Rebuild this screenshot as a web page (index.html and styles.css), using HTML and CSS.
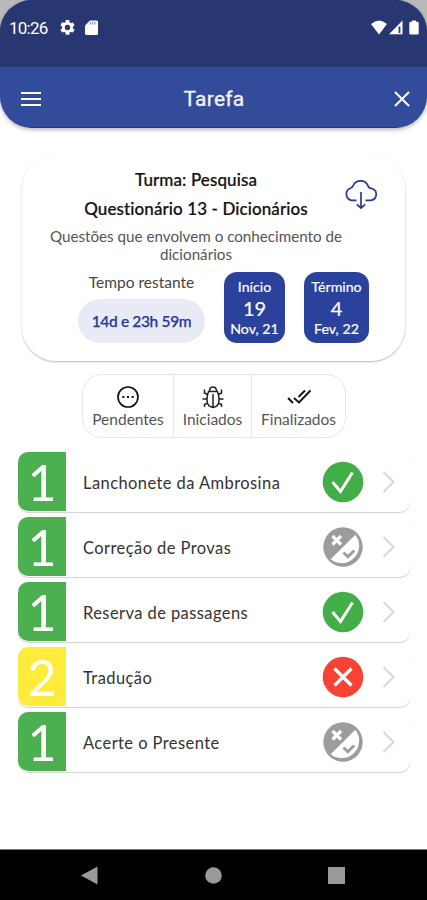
FILE: index.html
```html
<!DOCTYPE html>
<html lang="pt-BR">
<head>
<meta charset="utf-8">
<title>Tarefa</title>
<link rel="stylesheet" href="styles.css">
</head>
<body>
<svg width="0" height="0" class="defs" aria-hidden="true">
  <symbol id="ok" viewBox="0 0 42 42"><circle cx="21" cy="21" r="20.3" fill="#43ad47"/><path d="M10.500 21l8 9.500L30.500 11.500" fill="none" stroke="#fff" stroke-width="3"/></symbol>
  <symbol id="bad" viewBox="0 0 42 42"><circle cx="21" cy="21" r="20.3" fill="#f74234"/><path d="M12.500 12.500l17 17M29.500 12.500l-17 17" fill="none" stroke="#fff" stroke-width="3.200"/></symbol>
  <symbol id="half" viewBox="0 0 42 42"><circle cx="21" cy="21" r="19.700" fill="#9c9c9c"/><path d="M33.300 8.700A17.500 17.500 0 0 1 8.700 33.300z" fill="#fff"/><path d="M10.500 10l8.500 8.500M19 10l-8.500 8.500" stroke="#fff" stroke-width="3.200" fill="none"/><path d="M21.500 26.500l4.300 4.300 6.400-6.400" stroke="#9c9c9c" stroke-width="2.800" fill="none"/></symbol>
  <symbol id="chev" viewBox="0 0 14 22"><path d="M1.500 1l10 10-10 10" fill="none" stroke="#d8d8d8" stroke-width="2"/></symbol>
</svg>
<header class="top">
  <div class="status">
    <span class="clock">10:26</span>
    <svg class="gear" width="15" height="15" viewBox="2 2 20 20"><path fill="#fff" d="M19.140 12.940c.04-.3.060-.61.060-.94s-.02-.64-.07-.94l2.030-1.580a.49.49 0 0 0 .12-.61l-1.920-3.320a.49.49 0 0 0-.59-.22l-2.390.96a7 7 0 0 0-1.620-.94l-.36-2.540A.48.48 0 0 0 13.920 2h-3.840a.48.48 0 0 0-.47.410l-.36 2.540c-.59.240-1.130.57-1.620.94l-2.390-.96a.49.49 0 0 0-.59.220L2.740 8.870a.48.48 0 0 0 .12.610l2.030 1.580a7 7 0 0 0 0 1.880l-2.030 1.580a.49.49 0 0 0-.12.610l1.920 3.320c.12.220.370.290.590.220l2.390-.96c.5.380 1.030.7 1.620.94l.36 2.540c.05.240.240.410.480.410h3.840c.240 0 .440-.17.470-.41l.36-2.540c.59-.24 1.130-.56 1.620-.94l2.390.96c.22.080.470 0 .59-.22l1.920-3.320a.48.48 0 0 0-.12-.61zM12 15.600a3.600 3.600 0 1 1 0-7.200 3.600 3.600 0 0 1 0 7.200z"/></svg>
    <svg class="sd" width="13" height="15" viewBox="0 0 13 15"><path fill="#fff" d="M5 .5h6.500Q13 .5 13 2v11.500q0 1.500-1.500 1.500h-10Q0 15 0 13.500V5.500z"/><path d="M5.500 2v2.500M7.700 2v2.500M9.900 2v2.500" stroke="#8d95b9" stroke-width="1.200"/></svg>
    <svg class="signals" width="49" height="15" viewBox="0 0 49 15"><path fill="#fff" d="M0 4Q8-3 16 4L8 14.500z"/><path fill="#fff" d="M31.500.5v13.800H18z"/><path d="M28.500 6.500v6.500" stroke="#283772" stroke-width="1.800"/><path fill="#fff" d="M41 1.700V.5h4v1.200h1.500q1.200 0 1.200 1.200v10.300q0 1.200-1.200 1.200h-7q-1.200 0-1.200-1.200V2.900q0-1.200 1.200-1.200z"/></svg>
  </div>
  <div class="appbar">
    <svg width="20" height="14" viewBox="0 0 20 14"><path d="M0 1h20M0 7h20M0 13h20" stroke="#fff" stroke-width="2"/></svg>
    <h1>Tarefa</h1>
    <svg width="16" height="16" viewBox="0 0 16 16"><path d="M1 1l14 14M15 1L1 15" stroke="#fff" stroke-width="2"/></svg>
  </div>
</header>
<main>
  <section class="card">
    <div class="intro">
      <h2>Turma: Pesquisa</h2>
      <h2 class="quiz">Questionário 13 - Dicionários</h2>
      <p>Questões que envolvem o conhecimento de<br>dicionários</p>
    </div>
    <svg class="cloud" width="34" height="30" viewBox="0 0 34 30"><path d="M12.500 20.300H7.500A6.300 6.300 0 0 1 6.500 8.200Q8.500 7.500 9.200 5.500A8.200 8.200 0 0 1 24 5.600Q24.500 8.300 27.500 8.500A6 6 0 0 1 27 20.300h-5.500" fill="none" stroke="#27389b" stroke-width="1.700"/><path d="M17 12v15M12.800 24.300L17 28l4.200-3.700" fill="none" stroke="#27389b" stroke-width="1.700"/></svg>
    <div class="times">
      <div class="remaining"><span class="label">Tempo restante</span><span class="pill">14d e 23h 59m</span></div>
      <div class="date start"><span>Início</span><b>19</b><span>Nov, 21</span></div>
      <div class="date end"><span>Término</span><b>4</b><span>Fev, 22</span></div>
    </div>
  </section>
  <nav class="tabs">
    <a class="t1"><svg width="24" height="24" viewBox="0 0 24 24"><circle cx="12" cy="12" r="10" fill="none" stroke="#111" stroke-width="1.700"/><path d="M6.300 12h2M11 12h2M15.700 12h2" stroke="#111" stroke-width="1.900"/></svg><span>Pendentes</span></a>
    <a class="t2"><svg width="24" height="24" viewBox="0 0 24 24"><g fill="none" stroke="#222" stroke-width="1.500"><path d="M7.500 6.500h9q1.500 4 1.500 8.500 0 6.500-6 7.500-6-1-6-7.500 0-4.500 1.500-8.500zM8.500 6.500Q8.500 2 12 2t3.500 4.500M12 9v13M6.500 9.500L3.500 8V4.500M17.500 9.500l3-1.500V4.500M1.500 14H6M18 14h4.500M6.500 18l-3 1.500V22M17.500 18l3 1.500V22"/></g></svg><span>Iniciados</span></a>
    <a class="t3"><svg width="26" height="24" viewBox="0 0 26 24"><path d="M2 13l5 5M8 13l5 4.500L24.500 5.500M12.500 12l6.500-6.500" fill="none" stroke="#111" stroke-width="1.900"/></svg><span>Finalizados</span></a>
  </nav>
  <ul class="list">
    <li><b class="num">1</b><span class="name">Lanchonete da Ambrosina</span><svg class="state"><use href="#ok"/></svg><svg class="chev"><use href="#chev"/></svg></li>
    <li><b class="num">1</b><span class="name">Correção de Provas</span><svg class="state"><use href="#half"/></svg><svg class="chev"><use href="#chev"/></svg></li>
    <li><b class="num">1</b><span class="name">Reserva de passagens</span><svg class="state"><use href="#ok"/></svg><svg class="chev"><use href="#chev"/></svg></li>
    <li><b class="num yellow">2</b><span class="name">Tradução</span><svg class="state"><use href="#bad"/></svg><svg class="chev"><use href="#chev"/></svg></li>
    <li><b class="num">1</b><span class="name">Acerte o Presente</span><svg class="state"><use href="#half"/></svg><svg class="chev"><use href="#chev"/></svg></li>
  </ul>
</main>
<footer class="sysnav">
  <svg width="17" height="19" viewBox="0 0 17 19"><path d="M16.500.5v18L0 9.500z" fill="#999"/></svg>
  <svg width="17" height="17" viewBox="0 0 17 17"><circle cx="8.500" cy="8.500" r="8.300" fill="#999"/></svg>
  <svg width="17" height="17" viewBox="0 0 17 17"><path d="M0 0h17v17H0z" fill="#999"/></svg>
</footer>
</body>
</html>
```
FILE: styles.css
```css
* { box-sizing: border-box; }
html, body { margin: 0; }
body {
  height: 900px;
  overflow: hidden;
  display: flex;
  flex-direction: column;
  font-family: Lato, sans-serif;
  color: #222;
  background: linear-gradient(#b9b9b9 0 40px, #fff 40px);
}
.defs { position: absolute; }
svg { flex: none; display: block; }
.top {
  height: 128px;
  flex: none;
  border-radius: 32px;
  overflow: hidden;
  background: #324b9b;
  border-bottom: 1px solid #123a91;
  box-shadow: 0 2px 4px rgba(0, 0, 0, .28);
}
.status {
  height: 67px;
  background: #283772;
  display: flex;
  align-items: flex-start;
  padding: 20px 7px 0 9px;
}
.clock {
  width: 51px;
  font: 17px/16px Roboto, sans-serif;
  letter-spacing: -.75px;
  color: #fff;
  white-space: nowrap;
}
.sd { margin-left: 10px; }
.signals { margin-left: auto; }
.appbar {
  height: 61px;
  display: flex;
  align-items: center;
  justify-content: space-between;
  padding: 2px 17px 0 21px;
}
.appbar h1 {
  margin: 0 7px 0 0;
  font: 400 21px/26px Roboto, sans-serif;
  letter-spacing: .25px;
  color: #f3f4fb;
  -webkit-text-stroke: .3px #f3f4fb;
}
main { padding: 27px 17px 0 18px; flex: 1; }
.card {
  width: 383px;
  height: 206px;
  margin-left: 4px;
  padding: 12px 27px 0;
  border-radius: 34px;
  background: #fff;
  box-shadow: 0 1px 2px rgba(0, 0, 0, .28);
  display: grid;
  grid-template-columns: 294px 34px;
  align-content: start;
}
.intro { text-align: center; white-space: nowrap; }
.intro h2 {
  margin: 0;
  font-size: 17px;
  line-height: 25px;
  font-weight: 500;
  letter-spacing: .1px;
  color: #111;
  -webkit-text-stroke: .2px #111;
}
.intro .quiz { margin-top: 4px; }
.intro p {
  margin: 6px 0 0;
  font-size: 15.200px;
  line-height: 18px;
  color: #555;
}
.cloud { margin: 13px 0 0 1px; }
.times {
  grid-column: 1 / -1;
  display: flex;
  margin-top: 9px;
}
.remaining {
  width: 127px;
  margin-left: 29px;
  display: flex;
  flex-direction: column;
  align-items: center;
}
.label {
  font-size: 15.500px;
  line-height: 20px;
  color: #444;
  white-space: nowrap;
}
.pill {
  width: 127px;
  height: 44px;
  margin-top: 7px;
  border-radius: 22px;
  background: #e8ebf6;
  color: #27379b;
  font-size: 15.500px;
  font-weight: 500;
  letter-spacing: -.35px;
  line-height: 45px;
  text-align: center;
  white-space: nowrap;
  -webkit-text-stroke: .25px #27379b;
}
.date {
  height: 71px;
  width: 61px;
  margin-left: 19px;
  padding-top: 5px;
  border-radius: 13px;
  background: #2b429d;
  color: #fff;
  text-align: center;
  display: flex;
  flex-direction: column;
  font-size: 14.200px;
  line-height: 20px;
  white-space: nowrap;
  -webkit-text-stroke: .2px #fff;
}
.date b { font-size: 20px; line-height: 22px; font-weight: 400; }
.end { width: 65px; }
.tabs {
  width: 264px;
  height: 64px;
  margin: 13px 0 0 64px;
  border: 1px solid #e5e5e5;
  border-radius: 20px;
  display: flex;
  font-size: 15.500px;
  line-height: 20px;
  color: #555;
}
.tabs a {
  width: 91px;
  padding-top: 10px;
  display: flex;
  flex-direction: column;
  align-items: center;
  border-right: 1px solid #e5e5e5;
}
.tabs .t2 { width: 78px; }
.tabs .t3 { width: 93px; border: 0; }
.list {
  margin: 14px 0 0;
  padding: 0;
  list-style: none;
  display: flex;
  flex-direction: column;
  gap: 5px;
}
.list li {
  height: 60px;
  width: 392px;
  padding-right: 14px;
  border-radius: 10px;
  background: #fff;
  box-shadow: 0 1px 1px rgba(0, 0, 0, .18);
  display: flex;
  align-items: center;
}
.num {
  width: 48px;
  height: 59px;
  align-self: flex-start;
  border-radius: 10px 0 0 10px;
  background: #4caf50;
  color: #fff;
  font-size: 50px;
  line-height: 61px;
  font-weight: 400;
  text-align: center;
}
.yellow { background: #ffeb3b; }
.name {
  flex: 1;
  padding: 1px 0 0 17px;
  font-size: 16.500px;
  letter-spacing: .42px;
  color: #333;
  white-space: nowrap;
}
.state { width: 42px; height: 42px; }
.chev { width: 14px; height: 22px; margin-left: 18px; }
.sysnav {
  height: 51px;
  flex: none;
  background: #000;
  border-top: 1px solid #777;
  display: flex;
  align-items: center;
  justify-content: space-between;
  padding: 0 82px 0 81px;
}
```
